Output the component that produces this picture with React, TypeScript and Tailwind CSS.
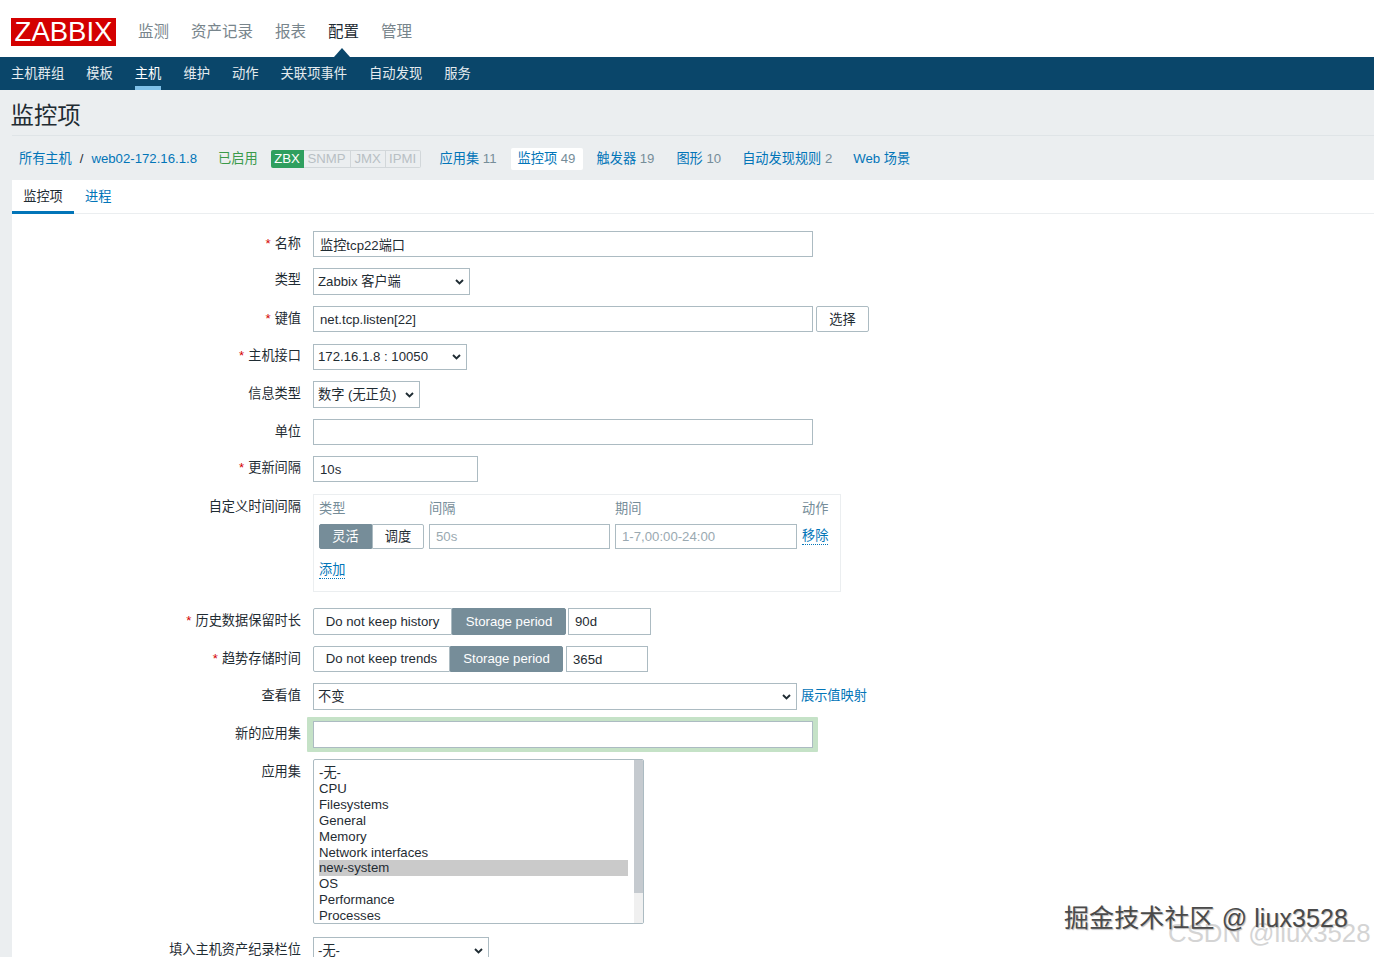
import type { ReactNode } from 'react'

const font = { fontFamily: '"Liberation Sans", "Noto Sans CJK SC", Arial, sans-serif' }

const topMenu = ['监测', '资产记录', '报表', '配置', '管理']
const subMenu = ['主机群组', '模板', '主机', '维护', '动作', '关联项事件', '自动发现', '服务']
const apps = ['CPU', 'Filesystems', 'General', 'Memory', 'Network interfaces', 'new-system', 'OS', 'Performance', 'Processes']

function Row({ label, required, className, labelClass, children }: { label: string; required?: boolean; className?: string; labelClass?: string; children: ReactNode }) {
  return (
    <div className={`flex ${className ?? ''}`}>
      <label className={`w-[289px] shrink-0 text-right leading-[18px] pt-[4px] ${labelClass ?? ''}`}>
        {required && <span className="text-[#d40000] mr-[4px]">*</span>}
        {label}
      </label>
      <div className="ml-[12px] flex items-start">{children}</div>
    </div>
  )
}

function TextBox({ value, className }: { value?: string; className: string }) {
  return (
    <input
      readOnly
      value={value ?? ''}
      className={`border border-[#acbbc2] bg-white px-[6px] text-[#1f2c33] outline-none ${className}`}
    />
  )
}

function Dropdown({ value, className }: { value: string; className: string }) {
  return (
    <div className="relative">
      <select defaultValue={value} className={`block appearance-none border border-[#acbbc2] bg-white pl-[4px] text-[#1f2c33] outline-none ${className}`}>
        <option>{value}</option>
      </select>
      <svg className="absolute right-[6px] top-1/2 -mt-[3px] pointer-events-none" width="9" height="6" viewBox="0 0 9 6" fill="none">
        <path d="M1 1l3.5 3.5L8 1" stroke="#1f2c33" strokeWidth="1.9" />
      </svg>
    </div>
  )
}

function Segmented({ left, right, leftW, rightW, active, h }: { left: string; right: string; leftW: string; rightW: string; active: 'left' | 'right'; h: string }) {
  const on = 'bg-[#768d99] text-white border-[#768d99]'
  const off = 'bg-white text-[#1f2c33] border-[#acbbc2]'
  return (
    <div className={`flex ${h}`}>
      <div className={`${leftW} flex items-center justify-center border rounded-l-[2px] ${active === 'left' ? on : off}`}>{left}</div>
      <div className={`${rightW} flex items-center justify-center border rounded-r-[2px] ${active === 'right' ? on : off}`}>{right}</div>
    </div>
  )
}

export default function App() {
  return (
    <div style={font} className="relative h-[957px] overflow-hidden bg-[#ebeef0] text-[13.2px] text-[#1f2c33]">
      {/* top menu */}
      <header className="h-[57px] bg-white flex pl-[11px] relative">
        <div className="mt-[18px] w-[105px] h-[28px] bg-[#d40000] text-white text-[27.5px] leading-[28px] text-center">ZABBIX</div>
        <nav className="ml-[22px] flex gap-[22px] pt-[22px] text-[15.5px] leading-[20px] text-[#78858c]">
          {topMenu.map(m => (
            <span key={m} className={m === '配置' ? 'text-[#1f2c33]' : ''}>{m}</span>
          ))}
        </nav>
        <div className="absolute left-[334px] top-[48px] w-0 h-0 border-x-[8px] border-x-transparent border-b-[9px] border-b-[#0a466a]" />
      </header>
      <nav className="h-[33px] bg-[#0a466a] flex gap-[22px] pl-[11px] text-[13.3px] text-[#e4ebef]">
        {subMenu.map(m => (
          <span key={m} className={`leading-[33px] ${m === '主机' ? 'text-white border-b-[4px] border-[#7ec0e8] h-[33px]' : ''}`}>{m}</span>
        ))}
      </nav>

      {/* title */}
      <div className="ml-[12px] h-[46px] border-b border-[#dfe4e7]">
        <h1 className="text-[23.4px] leading-[52px] -ml-[1.5px]">监控项</h1>
      </div>

      {/* host breadcrumbs */}
      <div className="h-[44px] pt-[2px] flex items-center text-[#0275b8] pl-[19px] whitespace-nowrap">
        <span>所有主机</span>
        <span className="ml-[8px] text-[#1f2c33]">/</span>
        <span className="ml-[8px]">web02-172.16.1.8</span>
        <span className="ml-[21px] text-[#3a9a4a]">已启用</span>
        <div className="ml-[13px] flex h-[18px] leading-[16px] text-center">
          <span className="w-[33px] bg-[#2f9f5f] text-white rounded-l-[2px] leading-[18px]">ZBX</span>
          <span className="w-[47px] border-y border-r border-[#d2d7da] text-[#b8bfc4]">SNMP</span>
          <span className="w-[35px] border-y border-r border-[#d2d7da] text-[#b8bfc4]">JMX</span>
          <span className="w-[35px] border-y border-r border-[#d2d7da] text-[#b8bfc4] rounded-r-[2px]">IPMI</span>
        </div>
        <span className="ml-[19px]">应用集 <span className="text-[#768d99]">11</span></span>
        <span className="ml-[14px] w-[72px] h-[22px] leading-[22px] pl-[7px] bg-white rounded-[2px]">监控项 <span className="text-[#768d99]">49</span></span>
        <span className="ml-[14px]">触发器 <span className="text-[#768d99]">19</span></span>
        <span className="ml-[22px]">图形 <span className="text-[#768d99]">10</span></span>
        <span className="ml-[21px]">自动发现规则 <span className="text-[#768d99]">2</span></span>
        <span className="ml-[21px]">Web 场景</span>
      </div>

      {/* form card */}
      <main className="ml-[12px] bg-white h-[800px]">
        <div className="h-[34px] flex border-b border-[#ebeef0]">
          <span className="w-[62px] h-[34px] text-center leading-[33px] border-b-[3px] border-[#0275b8]">监控项</span>
          <span className="ml-[11px] leading-[33px] text-[#0275b8]">进程</span>
        </div>

        <div className="pt-[17px]">
          <Row label="名称" required>
            <TextBox value="监控tcp22端口" className="w-[500px] h-[26px]" />
          </Row>
          <Row label="类型" className="mt-[11px]" labelClass="!pt-[3px]">
            <Dropdown value="Zabbix 客户端" className="w-[157px] h-[27px]" />
          </Row>
          <Row label="键值" required className="mt-[11px]">
            <TextBox value="net.tcp.listen[22]" className="w-[500px] h-[26px]" />
            <button className="ml-[3px] w-[53px] h-[26px] pt-[1px] border border-[#acbbc2] rounded-[2px] bg-white">选择</button>
          </Row>
          <Row label="主机接口" required className="mt-[11.5px]" labelClass="!pt-[3px]">
            <Dropdown value="172.16.1.8 : 10050" className="w-[154px] h-[26.5px]" />
          </Row>
          <Row label="信息类型" className="mt-[11px]">
            <Dropdown value="数字 (无正负)" className="w-[107px] h-[27px]" />
          </Row>
          <Row label="单位" className="mt-[11px]">
            <TextBox className="w-[500px] h-[26px]" />
          </Row>
          <Row label="更新间隔" required className="mt-[11px]" labelClass="!pt-[3px]">
            <TextBox value="10s" className="w-[165px] h-[26px]" />
          </Row>

          <Row label="自定义时间间隔" className="mt-[12px]">
            <div className="w-[528px] h-[98px] border border-[#ebeef0] px-[5px] pt-[5px]">
              <div className="flex h-[18px] leading-[18px] text-[#768d99]">
                <span className="w-[110px]">类型</span>
                <span className="w-[186px]">间隔</span>
                <span className="w-[187px]">期间</span>
                <span>动作</span>
              </div>
              <div className="flex mt-[6px] items-start">
                <Segmented left="灵活" right="调度" leftW="w-[53px]" rightW="w-[52px]" active="left" h="h-[25px]" />
                <TextBox value="50s" className="ml-[5px] w-[181px] h-[25px] !text-[#9aa9b1]" />
                <TextBox value="1-7,00:00-24:00" className="ml-[5px] w-[182px] h-[25px] !text-[#9aa9b1]" />
                <span className="ml-[5px] mt-[3px] leading-[17px] text-[#0275b8] border-b border-dotted border-[#0275b8]">移除</span>
              </div>
              <span className="inline-block mt-[12px] leading-[17px] text-[#0275b8] border-b border-dotted border-[#0275b8]">添加</span>
            </div>
          </Row>

          <Row label="历史数据保留时长" required className="mt-[16px]">
            <Segmented left="Do not keep history" right="Storage period" leftW="w-[139px]" rightW="w-[114px]" active="right" h="h-[27px]" />
            <TextBox value="90d" className="ml-[2px] w-[83px] h-[27px]" />
          </Row>
          <Row label="趋势存储时间" required className="mt-[11px]">
            <Segmented left="Do not keep trends" right="Storage period" leftW="w-[137px]" rightW="w-[113px]" active="right" h="h-[26px]" />
            <TextBox value="365d" className="ml-[3px] w-[82px] h-[26px]" />
          </Row>
          <Row label="查看值" className="mt-[11px]">
            <Dropdown value="不变" className="w-[484px] h-[27px]" />
            <span className="ml-[4px] pt-[4px] leading-[18px] text-[#0275b8]">展示值映射</span>
          </Row>
          <Row label="新的应用集" className="mt-[7px]" labelClass="!pt-[8px]">
            <div className="-ml-[6px] w-[511px] h-[35px] bg-[#c5e2c7] rounded-[1px] pl-[6px] pt-[4px]">
              <input readOnly className="block w-[500px] h-[27px] border border-[#acbbc2] bg-white outline-none" />
            </div>
          </Row>
          <Row label="应用集" className="mt-[7px]">
            <div className="w-[331px] h-[165px] border border-[#acbbc2] rounded-[2px] flex overflow-hidden">
              <div className="w-[320px] pl-[5px] pt-[5px] leading-[15.9px]">
                <div>-无-</div>
                {apps.map(a => (
                  <div key={a} className={`w-[309px] ${a === 'new-system' ? 'bg-[#cacaca]' : ''}`}>{a}</div>
                ))}
              </div>
              <div className="w-[9px] ml-auto bg-[#f0f0f0]">
                <div className="h-[133px] bg-[#c5cacf]" />
              </div>
            </div>
          </Row>
          <Row label="填入主机资产纪录栏位" className="mt-[13px]">
            <Dropdown value="-无-" className="w-[176px] h-[27px]" />
          </Row>
        </div>
      </main>

      {/* watermarks */}
      <div className="absolute left-[1168px] top-[917px] text-[25.8px] leading-[32px] text-[#d4d4d4] whitespace-nowrap">CSDN @liux3528</div>
      <div className="absolute left-[1064px] top-[901px] text-[25px] tracking-[0.1px] leading-[34px] text-[#4a4a4a] whitespace-nowrap [text-shadow:1px_1px_1px_#bbb]">掘金技术社区 @ liux3528</div>
    </div>
  )
}
